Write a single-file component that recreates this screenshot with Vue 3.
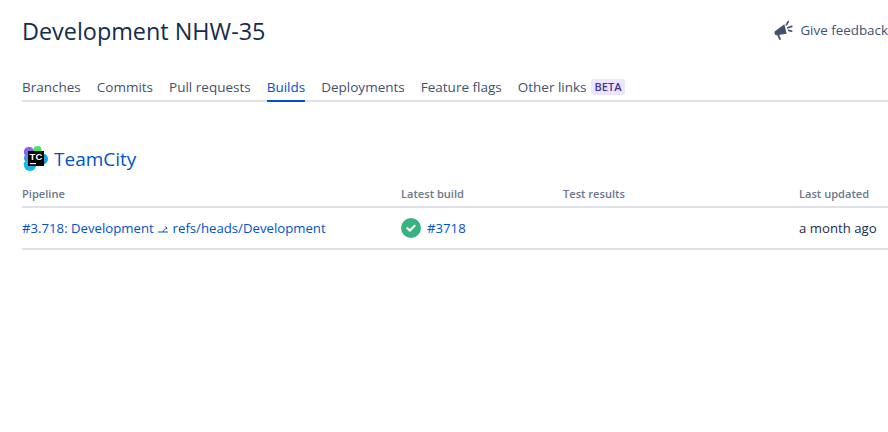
<script setup>
const tabs = [
  { label: 'Branches' },
  { label: 'Commits' },
  { label: 'Pull requests' },
  { label: 'Builds', active: true },
  { label: 'Deployments' },
  { label: 'Feature flags' },
  { label: 'Other links', beta: true }
]
</script>

<template>
  <div class="page">
    <header class="head">
      <h1 class="title">Development NHW-35</h1>
      <a class="feedback">
        <svg class="mega" width="22" height="22" viewBox="0 0 22 22">
          <path d="M0.6 12.4 L10.4 5.2 L12.6 14.8 L2.6 16.2 C0.8 16.2 0.2 13.8 0.6 12.4Z" fill="#42526e"/>
          <path d="M3.2 16.2 L5.2 15.8 L7 20.4 L5.4 21Z" fill="#42526e"/>
          <path d="M12.4 5.8 L14.2 2.6 M13.8 8.8 L17.8 7.4 M14.6 11.4 L17.6 12.2" stroke="#42526e" stroke-width="1.7" stroke-linecap="round" fill="none"/>
        </svg>
        <span>Give feedback</span>
      </a>
    </header>

    <nav class="tabs">
      <a v-for="t in tabs" :key="t.label" class="tab" :class="{ active: t.active }">
        {{ t.label }}<span v-if="t.beta" class="beta">BETA</span>
      </a>
    </nav>

    <section class="tool">
      <svg class="logo" width="26" height="26" viewBox="0 -2 26 26">
        <circle cx="7" cy="4" r="5.2" fill="#8f5fe8"/>
        <circle cx="15.5" cy="2" r="4" fill="#3bea62"/>
        <circle cx="6" cy="10" r="4" fill="#4f8be8"/>
        <circle cx="8" cy="16.8" r="6.2" fill="#17b8e8"/>
        <circle cx="20.5" cy="11" r="5.5" fill="#1aa2e8"/>
        <rect x="6" y="3" width="16" height="15" fill="#000"/>
        <text x="7.6" y="12" class="logo-text">TC</text>
        <rect x="8" y="15" width="6" height="1.2" fill="#fff"/>
      </svg>
      <h2 class="tool-name">TeamCity</h2>
    </section>

    <div class="table">
      <div class="row th">
        <div class="c1">Pipeline</div>
        <div class="c2">Latest build</div>
        <div class="c3">Test results</div>
        <div class="c4">Last updated</div>
      </div>
      <div class="row td">
        <div class="c1 link">#3.718: Development
          <svg class="branch" width="10" height="8" viewBox="0 0 10 8">
            <path d="M0 7 H10 M5 7 C5.5 5 7 3.6 9 3.4 M7.2 1.6 L9.2 3.2" stroke="#0052cc" stroke-width="1" fill="none"/>
          </svg>
          refs/heads/Development</div>
        <div class="c2 build">
          <svg width="20" height="20" viewBox="0 0 20 20">
            <circle cx="10" cy="10" r="10" fill="#36b37e"/>
            <path d="M6.4 10.2 L9 12.6 L13.6 7.8" stroke="#fff" stroke-width="2.2" fill="none" stroke-linecap="round" stroke-linejoin="round"/>
          </svg>
          <span class="link">#3718</span>
        </div>
        <div class="c3"></div>
        <div class="c4 when">a month ago</div>
      </div>
    </div>
  </div>
</template>

<style scoped>
.page {
  width: 888px;
  height: 432px;
  overflow: hidden;
  box-sizing: border-box;
  padding: 13px 0 0 22px;
  font-family: "Open Sans", "Noto Sans", sans-serif;
  color: #172b4d;
  background: #fff;
}
.head {
  display: flex;
  align-items: center;
  justify-content: space-between;
  width: 866px;
  height: 36px;
}
.title {
  margin: 0;
  font-size: 23.4px;
  font-weight: 500;
  line-height: 36px;
  color: #172b4d;
}
.feedback {
  display: flex;
  align-items: center;
  gap: 4px;
  margin-bottom: 2px;
  font-size: 13.4px;
  font-weight: 500;
  color: #42526e;
  white-space: nowrap;
}
.tabs {
  display: flex;
  width: 866px;
  gap: 16px;
  margin-top: 19px;
  height: 34px;
  box-sizing: border-box;
  border-bottom: 2px solid #dfe1e6;
}
.tab {
  display: flex;
  align-items: center;
  height: 34px;
  box-sizing: border-box;
  padding-top: 6px;
  border-bottom: 2px solid transparent;
  font-size: 13.5px;
  font-weight: 500;
  color: #42526e;
  white-space: nowrap;
}
.tab.active {
  color: #0052cc;
  border-bottom-color: #0052cc;
}
.beta {
  margin-left: 4px;
  padding: 0 4px;
  height: 16px;
  line-height: 16px;
  border-radius: 3px;
  background: #eae6ff;
  color: #403294;
  font-size: 11px;
  font-weight: 600;
}
.tool {
  display: flex;
  align-items: center;
  gap: 6px;
  margin-top: 42px;
  height: 30px;
}
.logo-text {
  font-family: "Liberation Sans", sans-serif;
  font-size: 9.5px;
  font-weight: 700;
  fill: #fff;
}
.tool-name {
  margin: 0;
  font-size: 19px;
  font-weight: 500;
  color: #0052cc;
}
.table {
  width: 866px;
  margin-top: 6px;
}
.row {
  display: grid;
  grid-template-columns: 379px 162px 236px 1fr;
  align-items: center;
}
.th {
  height: 26px;
  border-bottom: 2px solid #dfe1e6;
  font-size: 11.1px;
  font-weight: 600;
  color: #6b778c;
}
.td {
  height: 40px;
  border-bottom: 2px solid #dfe1e6;
  font-size: 13.2px;
}
.link {
  color: #0052cc;
}
.branch {
  margin: 0 1px;
}
.build {
  display: flex;
  align-items: center;
  gap: 6px;
}
.when {
  color: #172b4d;
  white-space: nowrap;
}
</style>
